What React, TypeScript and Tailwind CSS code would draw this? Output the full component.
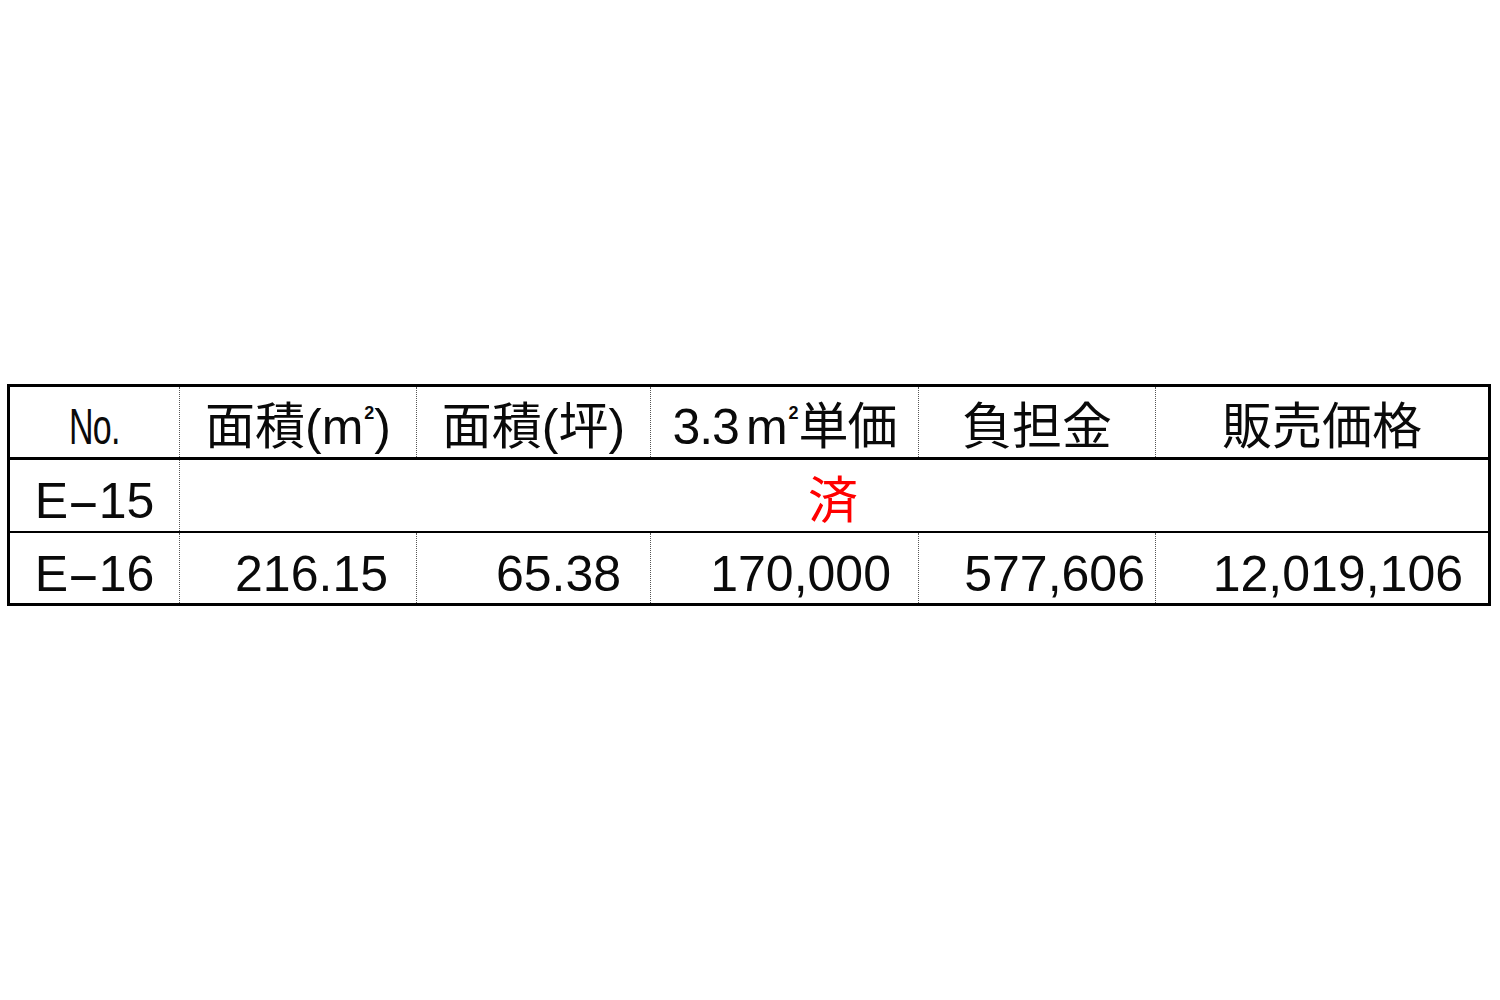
import React from "react";

const font = "font-['Liberation_Sans','Noto_Sans_CJK_JP',sans-serif]";

function M2() {
  return (
    <span className="inline-flex items-start">
      m<span className="text-[18px] font-bold leading-none ml-[1px] mt-[2px] font-['Liberation_Sans',sans-serif]">2</span>
    </span>
  );
}

function Dash() {
  return <span className="inline-block scale-x-[2] mx-[7px]">-</span>;
}

const widths = ["w-[169px]", "w-[237px]", "w-[234px]", "w-[268px]", "w-[237px]", "w-[333px]"];

export default function App() {
  const cell = "flex h-full items-center shrink-0";
  const dotted = "border-l border-dotted border-[#555]";
  return (
    <div className={`min-h-[1000px] w-[1500px] bg-white text-[#0a0a0a] ${font}`}>
      <div className="pt-[384px] pl-[7px]">
        <div className="w-[1484px] border-[3px] border-black text-[50px] leading-none">
          {/* header */}
          <div className="flex h-[73px] border-b-[3px] border-black">
            <div className={`${cell} ${widths[0]} justify-center pt-[10px]`}>
              <span className="inline-block scale-x-[0.68] tracking-[-1px]">No.</span>
            </div>
            <div className={`${cell} ${widths[1]} ${dotted} justify-center pt-[10px]`}>
              <span className="flex items-start">面積(<M2 />)</span>
            </div>
            <div className={`${cell} ${widths[2]} ${dotted} justify-center pt-[10px]`}>
              <span>面積(坪)</span>
            </div>
            <div className={`${cell} ${widths[3]} ${dotted} justify-center pt-[10px]`}>
              <span className="flex items-start tracking-[-1px]">
                3.3<span className="ml-[7px] flex items-start tracking-normal"><M2 /></span>単価
              </span>
            </div>
            <div className={`${cell} ${widths[4]} ${dotted} justify-center pt-[10px]`}>
              <span>負担金</span>
            </div>
            <div className={`${cell} ${widths[5]} ${dotted} justify-center pt-[10px]`}>
              <span>販売価格</span>
            </div>
          </div>
          {/* row E-15 */}
          <div className="flex h-[73px] border-b-2 border-black">
            <div className={`${cell} ${widths[0]} justify-center pt-[11px]`}>
              <span>E<Dash />15</span>
            </div>
            <div className={`${cell} flex-1 ${dotted} justify-center pt-[11px] text-[#ff0000]`}>
              <span className="ml-[-2px]">済</span>
            </div>
          </div>
          {/* row E-16 */}
          <div className="flex h-[70px]">
            <div className={`${cell} ${widths[0]} justify-center pt-[12px]`}>
              <span>E<Dash />16</span>
            </div>
            <div className={`${cell} ${widths[1]} ${dotted} justify-end pr-[28px] pt-[12px]`}>
              <span>216.15</span>
            </div>
            <div className={`${cell} ${widths[2]} ${dotted} justify-end pr-[29px] pt-[12px]`}>
              <span>65.38</span>
            </div>
            <div className={`${cell} ${widths[3]} ${dotted} justify-end pr-[27px] pt-[12px]`}>
              <span>170,000</span>
            </div>
            <div className={`${cell} ${widths[4]} ${dotted} justify-end pr-[10px] pt-[12px]`}>
              <span>577,606</span>
            </div>
            <div className={`${cell} ${widths[5]} ${dotted} justify-end pr-[25px] pt-[12px]`}>
              <span>12,019,106</span>
            </div>
          </div>
        </div>
      </div>
    </div>
  );
}
